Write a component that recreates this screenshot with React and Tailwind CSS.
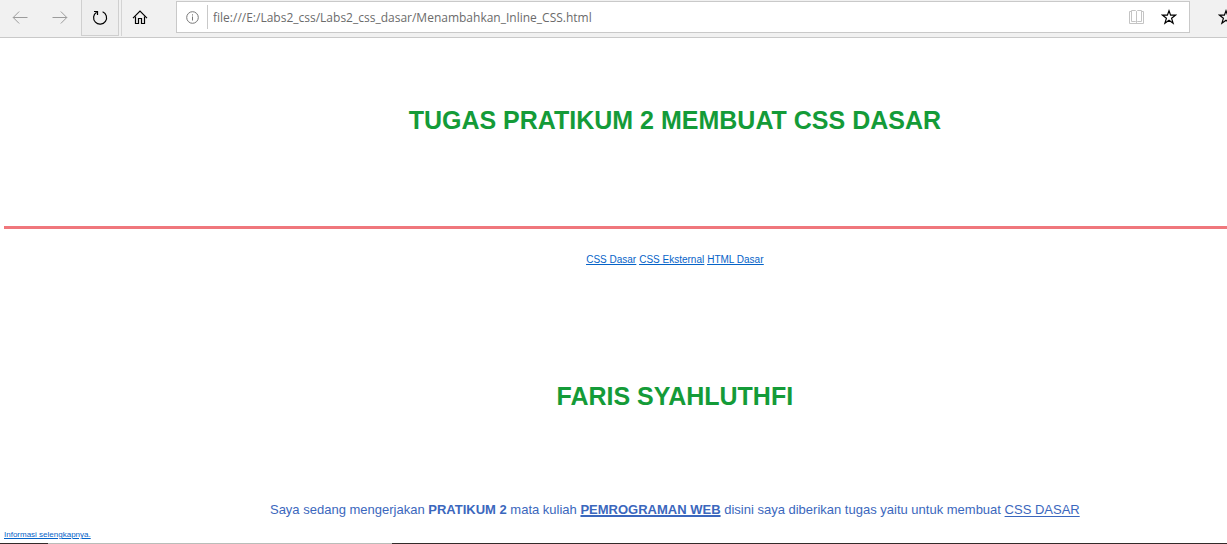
import React from "react";

const line = { fill: "none", stroke: "currentColor" };

function BackIcon() {
  return (
    <svg width="16" height="14" viewBox="0 0 16 14" aria-hidden="true" {...line}>
      <path d="M1.2 6.5H15.5M7.2 0.5L1.2 6.5L7.2 12.5" />
    </svg>
  );
}

function ForwardIcon() {
  return (
    <svg width="16" height="14" viewBox="0 0 16 14" aria-hidden="true" {...line}>
      <path d="M0.5 6.5H14.8M8.8 0.5L14.8 6.5L8.8 12.5" />
    </svg>
  );
}

function RefreshIcon() {
  return (
    <svg width="16" height="16" viewBox="0 0 16 16" aria-hidden="true" {...line} strokeWidth="1.2">
      <path d="M10.6 1.7A6.5 6.5 0 1 1 4.6 2.2" />
      <path d="M2 1.5H5.5V5" />
    </svg>
  );
}

function HomeIcon() {
  return (
    <svg width="16" height="16" viewBox="0 0 16 16" aria-hidden="true" {...line} strokeWidth="1.2">
      <path d="M1 8.2L8 1.2L15 8.2" />
      <path d="M3.5 6.5V13.5H6.5V8.5H9.5V13.5H12.5V6.5" />
    </svg>
  );
}

function InfoIcon() {
  return (
    <svg width="13" height="13" viewBox="0 0 13 13" aria-hidden="true" {...line}>
      <circle cx="6.5" cy="6.5" r="5.8" />
      <path d="M6.5 5.5V9.5M6.5 3.3V4.5" />
    </svg>
  );
}

function BookIcon() {
  return (
    <svg width="16" height="14" viewBox="0 0 16 14" aria-hidden="true" {...line}>
      <path d="M2.5 0.5H6.5L7.5 1.5L8.5 0.5H12.5V11.5H8.5L7.5 12.5L6.5 11.5H2.5Z" />
      <path d="M7.5 1.5V12.5M2.5 1.5H0.5V13.5H14.5V1.5H12.5" />
    </svg>
  );
}

function StarIcon() {
  return (
    <svg className="shrink-0" width="16" height="16" viewBox="0 0 16 16" aria-hidden="true" {...line} strokeWidth="1.2">
      <path d="M8 1.8L9.6 6.2H14.4L10.6 9.3L12.1 14.3L8 11.3L3.9 14.3L5.4 9.3L1.6 6.2H6.4Z" />
    </svg>
  );
}

function Toolbar() {
  return (
    <header className="flex h-[38px] items-start overflow-hidden border-b border-[#c9c9c9] bg-[#f1f1f1]">
      <button aria-label="Kembali" className="flex h-9 w-10 shrink-0 items-center justify-center text-[#9c9c9c]">
        <BackIcon />
      </button>
      <button aria-label="Maju" className="flex h-9 w-10 shrink-0 items-center justify-center text-[#9c9c9c]">
        <ForwardIcon />
      </button>
      <button aria-label="Muat ulang" className="ml-px flex h-9 w-[38px] shrink-0 items-center justify-center border-x border-b border-[#cfcfcf] bg-[#eeeeee] text-black">
        <RefreshIcon />
      </button>
      <button aria-label="Beranda" className="ml-0.5 flex h-9 w-9 shrink-0 items-center justify-center border-l border-[#d4d4d4] text-black">
        <HomeIcon />
      </button>
      <div className="mt-px ml-[19px] flex h-8 min-w-0 flex-1 items-center border border-[#c9c9c9] bg-white">
        <button aria-label="Info situs" className="flex h-6 w-[30px] shrink-0 items-center justify-center text-[#777777]">
          <InfoIcon />
        </button>
        <input
          type="text"
          aria-label="Alamat"
          defaultValue="file:///E:/Labs2_css/Labs2_css_dasar/Menambahkan_Inline_CSS.html"
          className="h-6 min-w-0 flex-1 border-l border-[#c9c9c9] pl-[5px] font-['Open_Sans','Noto_Sans',sans-serif] text-[12px] text-[#6b6b6b] outline-none"
        />
        <button aria-label="Tampilan baca" className="flex h-6 w-8 shrink-0 items-center justify-center text-[#c4c4c4]">
          <BookIcon />
        </button>
        <button aria-label="Tambahkan ke favorit" className="mr-1 flex h-6 w-8 shrink-0 items-center justify-center text-black">
          <StarIcon />
        </button>
      </div>
      <button aria-label="Favorit" className="flex h-[34px] w-[37px] shrink-0 items-center overflow-hidden pl-7 text-black">
        <StarIcon />
      </button>
    </header>
  );
}

export default function App() {
  return (
    <div className="overflow-hidden bg-white font-['Liberation_Sans',Arial,sans-serif]">
      <Toolbar />
      <main className="w-[110%] text-center">
        <h1 className="pt-[66px] text-[25px] leading-8 font-bold text-[#149b38]">
          TUGAS PRATIKUM 2 MEMBUAT CSS DASAR
        </h1>
        <hr className="mx-1 mt-[90px] border-t-[3px] border-[#f0777c]" />
        <nav className="mt-6 flex justify-center gap-[3px] text-[10px] leading-[14px] text-[#0563c8] underline">
          <a href="#dasar">CSS Dasar</a>
          <a href="#eksternal">CSS Eksternal</a>
          <a href="#html">HTML Dasar</a>
        </nav>
        <h2 className="mt-[113px] text-[25px] leading-8 font-bold text-[#149b38]">FARIS SYAHLUTHFI</h2>
        <p className="mt-[88px] text-[13px] leading-5 text-[#3b67bd]">
          Saya sedang mengerjakan <b>PRATIKUM 2</b> mata kuliah{" "}
          <b className="underline decoration-2">PEMROGRAMAN WEB</b> disini saya diberikan tugas yaitu untuk membuat{" "}
          <a href="#dasar" className="underline underline-offset-2">CSS DASAR</a>
        </p>
        <p className="mt-[9px] pl-1 text-left text-[8px] leading-3 text-[#0563c8]">
          <a href="#informasi" className="underline">Informasi selengkapnya.</a>
        </p>
      </main>
      <footer className="mt-0.5 flex h-px bg-[#332b2a]">
        <div className="ml-12 w-[344px] bg-[#b9bdb9]" />
      </footer>
    </div>
  );
}
